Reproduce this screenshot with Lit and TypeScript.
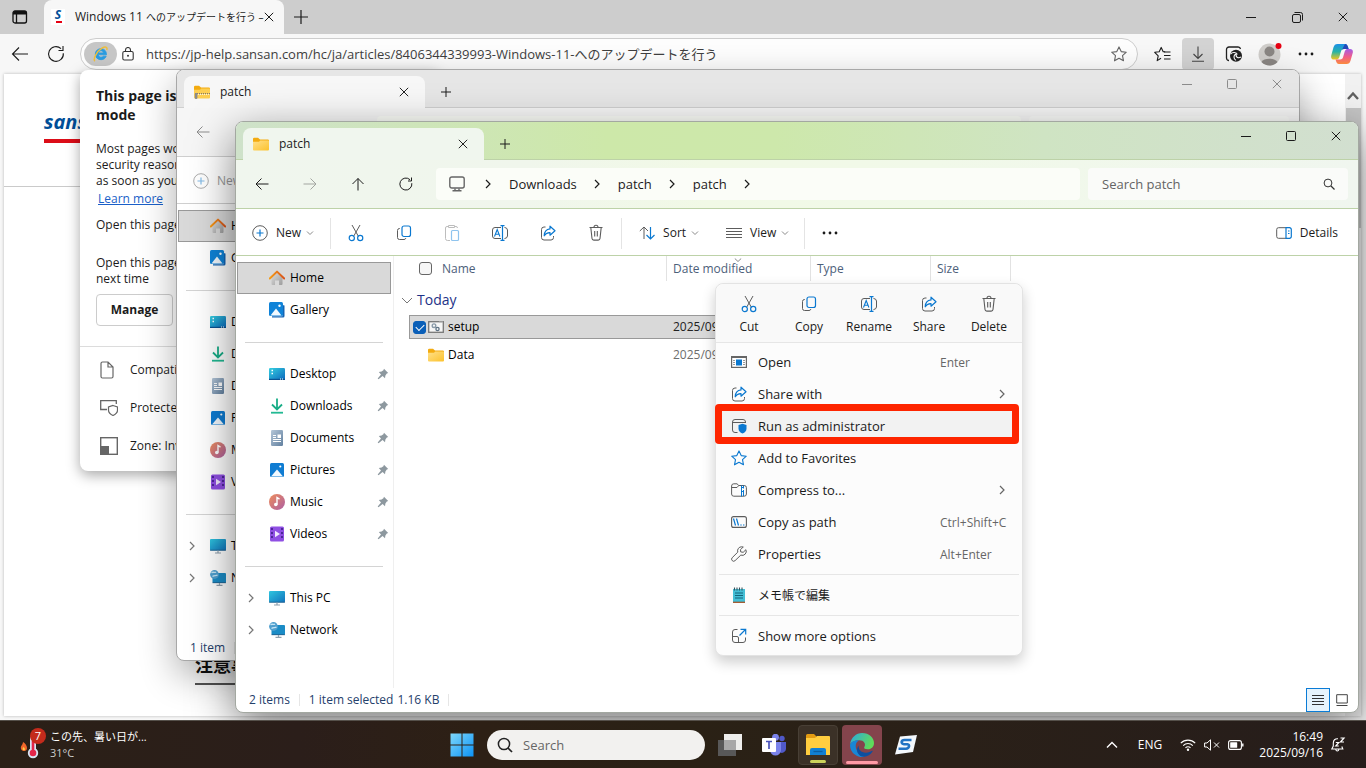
import { LitElement, html, svg, css, nothing, TemplateResult } from "lit";
import { customElement, property } from "lit/decorators.js";
import { classMap } from "lit/directives/class-map.js";

const box = (w: number, h: number, inner: unknown, vb = `0 0 ${w} ${h}`) =>
  html`<svg class="ic" width=${w} height=${h} viewBox=${vb} fill="none" aria-hidden="true">${inner}</svg>`;

const G = "#5c5c5c";
const B = "#0a78d0";

const icons: Record<string, () => TemplateResult> = {
  back: () => box(16, 16, svg`<path d="M14.500 8H2M7.500 2.500L2 8l5.500 5.500" stroke="currentColor"/>`),
  forward: () => box(16, 16, svg`<path d="M1.500 8H14M8.500 2.500L14 8l-5.500 5.500" stroke="currentColor"/>`),
  up: () => box(16, 16, svg`<path d="M8 14.500V2.500M2.500 8L8 2.500 13.500 8" stroke="currentColor"/>`),
  refresh: () => box(16, 16, svg`<path d="M13.800 7.200A6 6 0 1 1 12 3.700M13.500 1.500v3.500H10" stroke="currentColor"/>`),
  refreshBig: () => box(18, 18, svg`<path d="M16.300 8.200A7.400 7.400 0 1 1 14 3.600M16 1v4.500h-4.500" stroke="currentColor" stroke-width="1.100"/>`),
  backBig: () => box(18, 18, svg`<path d="M17 9H1.500M8 2.500L1.500 9l6.500 6.500" stroke="currentColor" stroke-width="1.100"/>`),
  close: () => box(10, 10, svg`<path d="M.8.8l8.400 8.400M9.200.8L.8 9.200" stroke="currentColor"/>`),
  plus: () => box(12, 12, svg`<path d="M6 1v10M1 6h10" stroke="currentColor"/>`),
  plusBig: () => box(16, 16, svg`<path d="M8 1v14M1 8h14" stroke="currentColor" stroke-width="1.200"/>`),
  min: () => box(10, 10, svg`<path d="M0 5.500h10" stroke="currentColor"/>`),
  max: () => box(10, 10, svg`<rect x=".5" y=".5" width="9" height="9" rx="1" stroke="currentColor"/>`),
  restore: () => box(11, 11, svg`<rect x=".5" y="2.500" width="8" height="8" rx="1.500" stroke="currentColor"/><path d="M2.500.5H8.500a2 2 0 0 1 2 2V8.500" stroke="currentColor"/>`),
  right: () => box(8, 10, svg`<path d="M2 1l4 4-4 4" stroke="currentColor" stroke-width="1.200"/>`),
  down: () => box(8, 6, svg`<path d="M1 1.500l3 3 3-3" stroke="#8a8a8a"/>`),
  search: () => box(12, 12, svg`<circle cx="5" cy="5" r="3.900" stroke="currentColor"/><path d="M8 8l3.500 3.500" stroke="currentColor" stroke-width="1.200"/>`),
  searchBig: () => box(16, 16, svg`<circle cx="7" cy="7" r="5.600" stroke="#222" stroke-width="1.500"/><path d="M11 11l4 4" stroke="#222" stroke-width="1.700"/>`),
  monitor: () => box(16, 16, svg`<rect x=".8" y="1" width="14.400" height="11" rx="2" stroke="#666" stroke-width="1.400"/><path d="M6 12.500v2M10 12.500v2M3.500 14.800h9" stroke="#666" stroke-width="1.400"/>`),
  newItem: () => box(16, 16, svg`<circle cx="8" cy="8" r="7.300" stroke="${G}"/><path d="M8 4.500v7M4.500 8h7" stroke="${B}" stroke-width="1.200"/>`),
  cut: () => box(16, 18, svg`<path d="M4 1l6.500 11.500M12 1L5.500 12.500" stroke="${G}"/><circle cx="3.800" cy="14" r="2.600" stroke="${B}" stroke-width="1.200"/><circle cx="12.200" cy="14" r="2.600" stroke="${B}" stroke-width="1.200"/>`),
  copy: () => box(16, 16, svg`<rect x="6" y="1" width="8.500" height="10.500" rx="2" stroke="${B}" stroke-width="1.200"/><path d="M4 3.500H3.500a2 2 0 0 0-2 2V12.500a2 2 0 0 0 2 2H8a2 2 0 0 0 1.900-1.400" stroke="${G}"/>`),
  paste: () => box(16, 18, svg`<path d="M6 16.500H3.500a2 2 0 0 1-2-2V4a1.500 1.500 0 0 1 1.500-1.500h1.500M10.500 2.500H12A1.500 1.500 0 0 1 13.500 4M4.500 1.500h6v2h-6z" stroke="#bdbdbd"/><rect x="7.500" y="6.500" width="7" height="10" rx="1" stroke="#8fc4ee" stroke-width="1.200"/>`),
  rename: () => box(18, 16, svg`<path d="M10 2.500H4a2.500 2.500 0 0 0-2.500 2.500v6A2.500 2.500 0 0 0 4 13.500h6M13.500 2.500a3 3 0 0 1 3 2.500v6a3 3 0 0 1-3 2.500" stroke="${G}"/><path d="M11.500.5v15M9.500.6h4M9.500 15.400h4" stroke="${B}" stroke-width="1.200"/><path d="M3.500 11.500l2.700-7 2.700 7M4.500 9.200h3.500" stroke="${B}" stroke-width="1.100"/>`),
  share: () => box(16, 16, svg`<path d="M5.500 2H4a2.500 2.500 0 0 0-2.500 2.500v8A2.500 2.500 0 0 0 4 15h7a2.500 2.500 0 0 0 2.500-2.500v-1.500" stroke="${G}"/><path d="M10 1.200l5 4.600-5 4.400V7.600C7.200 7.500 5.500 8.600 4.200 10.800 4.400 6.800 6.500 4.200 10 3.900z" stroke="${B}" stroke-width="1.200" stroke-linejoin="round"/>`),
  trash: () => box(16, 18, svg`<path d="M1.500 3.500h13M6 3.200a2 2 0 0 1 4 0M2.800 3.500l1.200 11a1.800 1.800 0 0 0 1.800 1.600h4.400a1.800 1.800 0 0 0 1.800-1.600l1.200-11M6.700 7v5.500M9.300 7v5.500" stroke="${G}" stroke-width="1.100"/>`),
  sort: () => box(16, 14, svg`<path d="M5 13V1M.8 5L5 1l4 4" stroke="${G}"/><path d="M11.500 1v12M7.500 9l4 4 4-4" stroke="${B}" stroke-width="1.200"/>`),
  lines: () => box(16, 12, svg`<path d="M0 1.500h16M0 4.500h16M0 7.500h16M0 10.500h16" stroke="${G}"/>`),
  dots: () => box(16, 4, svg`<circle cx="2" cy="2" r="1.400" fill="currentColor"/><circle cx="8" cy="2" r="1.400" fill="currentColor"/><circle cx="14" cy="2" r="1.400" fill="currentColor"/>`),
  details: () => box(16, 12, svg`<path d="M10 .7H2.500A1.800 1.800 0 0 0 .7 2.500v7a1.800 1.800 0 0 0 1.800 1.800H10" stroke="${G}"/><path d="M10 .7h3.500a1.800 1.800 0 0 1 1.800 1.800v7a1.800 1.800 0 0 1-1.800 1.800H10zM12 4h1.500M12 6.500h1.500" stroke="${B}" stroke-width="1.200"/>`),
  pin: () => box(12, 12, svg`<path d="M7 .8L11.200 5 9.800 5.600 8.400 7.400 8 10.300 5.600 8 1.500 11.300.7 10.500 4 6.400 1.800 4.100 4.600 3.600 6.400 2.200z" fill="#8d989f"/>`),
  folder: () => box(16, 16, svg`<defs><linearGradient id="fo" x2="1" y2="1"><stop stop-color="#ffe08a"/><stop offset="1" stop-color="#fcc22c"/></linearGradient></defs><path d="M0 3a1.200 1.200 0 0 1 1.200-1.200H5L7 3.500h7.800A1.200 1.200 0 0 1 16 4.700V8H0z" fill="#f3ab10"/><path d="M0 5.700h6l1.200-1.200H15a1 1 0 0 1 1 1v8a1 1 0 0 1-1 1H1a1 1 0 0 1-1-1z" fill="url(#fo)"/>`),
  zip: () => box(16, 16, svg`<path d="M0 3a1.200 1.200 0 0 1 1.200-1.200H5L7 3.500h7.800A1.200 1.200 0 0 1 16 4.700V8H0z" fill="#f3ab10"/><path d="M0 5.700h6l1.200-1.200H15a1 1 0 0 1 1 1v8a1 1 0 0 1-1 1H1a1 1 0 0 1-1-1z" fill="#fdcf52"/><path d="M1 9.500h15" stroke="#777" stroke-dasharray="1 1"/><path d="M2 10.500h14" stroke="#eee" stroke-dasharray="1 1"/><rect x=".8" y="9" width="2.600" height="6" rx="1" fill="#8b8b8b"/>`),
  home: () => box(16, 16, svg`<defs><linearGradient id="hg" x2="1" y2="1"><stop stop-color="#dedede"/><stop offset="1" stop-color="#9c9c9c"/></linearGradient><linearGradient id="hr" x2="1" y2="0"><stop stop-color="#f59b16"/><stop offset="1" stop-color="#d9541b"/></linearGradient></defs><path d="M2.500 7L8 2l5.500 5v7a1 1 0 0 1-1 1H10v-4.500H6V15H3.500a1 1 0 0 1-1-1z" fill="url(#hg)"/><path d="M.8 8.500L8 1.600l7.200 6.900" stroke="url(#hr)" stroke-width="2" stroke-linecap="round" stroke-linejoin="round"/>`),
  gallery: () => box(16, 16, svg`<path d="M3 14.200h10.500V3l2 .5V14a1.500 1.500 0 0 1-1.500 1.500H3z" fill="#1464b4"/><rect width="14" height="14" rx="1.500" fill="#0f83d8"/><path d="M1.500 13.500l5.500-7 5.500 7z" fill="#f2f9ff"/><circle cx="10.500" cy="3.800" r="1.200" fill="#fff"/>`),
  desktop: () => box(16, 16, svg`<defs><linearGradient id="dg" x2="1" y2="1"><stop stop-color="#34cfe0"/><stop offset="1" stop-color="#0c68bd"/></linearGradient></defs><rect y="2" width="16" height="12" rx="1.200" fill="url(#dg)"/><path d="M2.500 4.500h1.500M2.500 7.500h1.500" stroke="#fff" stroke-width="1.500"/><path d="M0 13.400h16" stroke="#0a5291" stroke-width="1.200"/><path d="M11 13h1M13 13h1" stroke="#fff"/>`),
  downloads: () => box(16, 16, svg`<path d="M8 .5v10.500M3 6.500l5 5 5-5" stroke="#19ad87" stroke-width="1.800"/><path d="M2 14.700h12" stroke="#22b993" stroke-width="1.800"/>`),
  documents: () => box(16, 16, svg`<defs><linearGradient id="dc" x2="1" y2="1"><stop stop-color="#b4c6d8"/><stop offset="1" stop-color="#62809f"/></linearGradient></defs><rect x="2" width="12" height="16" rx="1.200" fill="url(#dc)"/><path d="M4 5.500h3M4 7.500h3M4 9.500h8M4 11.500h8" stroke="#fff"/><rect x="8.500" y="4.500" width="3.500" height="3.500" fill="#fff"/>`),
  pictures: () => box(16, 16, svg`<rect x="1" y="1" width="14" height="14" rx="1.500" fill="#0f7cd2"/><path d="M2 14.500l6-7 6 7z" fill="#f2f9ff"/><circle cx="11.300" cy="4.500" r="1.100" fill="#fff"/>`),
  music: () => box(16, 16, svg`<defs><linearGradient id="mg" x2="1" y2="1"><stop stop-color="#ee8d5b"/><stop offset="1" stop-color="#ad5fa3"/></linearGradient></defs><circle cx="8" cy="8" r="8" fill="url(#mg)"/><circle cx="6.800" cy="10.500" r="1.800" fill="#fff"/><path d="M8 10.500V3.500l2.500 1.600" stroke="#fff" stroke-width="1.400"/>`),
  videos: () => box(16, 16, svg`<rect x="1" y=".5" width="14" height="15" rx="1.500" fill="#8f4fe3"/><path d="M3 2v12M13 2v12" stroke="#3e1f86" stroke-width="1.600" stroke-dasharray="2 2"/><path d="M6 4.800l5 3.200-5 3.200z" fill="#f1e8fd"/>`),
  pc: () => box(16, 16, svg`<defs><linearGradient id="pg" x2="1" y2="1"><stop stop-color="#2fc6df"/><stop offset="1" stop-color="#1173bd"/></linearGradient></defs><rect y="1" width="16" height="11.500" rx="1" fill="url(#pg)"/><path d="M0 12.200h16" stroke="#235b85" stroke-width=".8"/><path d="M8 12.500v2.500M5 15h6" stroke="#8fa0ad" stroke-width="1.200"/>`),
  network: () => box(16, 16, svg`<rect x="2.500" y="3" width="13.500" height="10" rx="1" fill="#1b8cc6"/><path d="M2.500 12.700H16" stroke="#235b85" stroke-width=".8"/><path d="M9.500 13v2M6.500 15.300h6" stroke="#8fa0ad" stroke-width="1.200"/><circle cx="4.500" cy="4.500" r="4.400" fill="#4f9fce"/><path d="M1.500 2.800c2-1.500 3 .5 4.500-.8M2.500 6.500c1.500-1.500 3.500-.5 5-1.500" stroke="#c6e5f5" stroke-width="1.300"/>`),
  script: () => box(16, 12, svg`<rect x=".7" y=".7" width="14.600" height="10.600" fill="#f6f6f6" stroke="#777" stroke-width="1.300"/><path d="M11 1h4" stroke="#bbb"/><circle cx="6" cy="4.700" r="1.800" stroke="#8a9aa8" stroke-width="1.400"/><circle cx="9.500" cy="8" r="1.600" stroke="#5d7183" stroke-width="1.300"/>`),
  expand: () => box(12, 7, svg`<path d="M1 1l5 5 5-5" stroke="#777"/>`),
  sortMark: () => box(8, 4, svg`<path d="M.8.5L4 3.500 7.200.5" stroke="#8a8a8a"/>`),
  thumb: () => box(12, 12, svg`<path d="M.7.7h10.600v8.300H.7zM.5 11.500h11" stroke="#444"/>`),
  rows: () => box(12, 12, svg`<path d="M0 1.500h12M0 4.500h12M0 7.500h12M0 10.500h12" stroke="#333"/>`),
  open: () => box(16, 12, svg`<rect x=".6" y=".6" width="14.800" height="10.800" fill="#fff" stroke="#666" stroke-width="1.200"/><path d="M1 1.500h14" stroke="#666"/><rect x="5" y="3.500" width="6" height="6" fill="#0a78d0"/><path d="M2 4.500h2M2 6.500h2M2 8.500h2M12 4.500h2M12 6.500h2M12 8.500h2" stroke="#999"/>`),
  admin: () => box(16, 16, svg`<path d="M6.500 14.500H4A2.500 2.500 0 0 1 1.500 12V4A2.500 2.500 0 0 1 4 1.500h8A2.500 2.500 0 0 1 14.500 4v1M1.500 4.500h13" stroke="${G}"/><path d="M11.500 5.800l4 1.300v3.600c0 2.200-1.500 3.800-4 4.800-2.500-1-4-2.600-4-4.800V7.100z" fill="#0a78d0"/>`),
  star: () => box(16, 16, svg`<path d="M8 .9l2.200 4.700 5.100.6-3.800 3.500 1 5.100L8 12.300l-4.500 2.500 1-5.100L.7 6.200l5.100-.6z" stroke="currentColor" stroke-linejoin="round" stroke-width="1.100"/>`),
  starList: () => box(17, 16, svg`<path d="M7 12.200L3.200 14.600l1-4.800L.7 6.300l4.500-.6L7.200 1.400l2 4.300h2" stroke="currentColor" stroke-linejoin="round" stroke-width="1.100"/><path d="M10 6h6.500M10 9.500h6.500M10 13h6.500" stroke="currentColor" stroke-width="1.100"/>`),
  compress: () => box(16, 14, svg`<path d="M.6 3A2.200 2.200 0 0 1 2.800.8H6l1.800 1.700h5.400a2.200 2.200 0 0 1 2.200 2.200v6.300a2.200 2.200 0 0 1-2.200 2.200H2.800A2.200 2.200 0 0 1 .6 11zM.6 4.500H6l1.800-2" stroke="${G}"/><path d="M10.500 2.500v11M12.500 2.500v3M12.500 7v6M10.500 4.500h2M10.500 8.500h2" stroke="${B}"/>`),
  path: () => box(16, 12, svg`<rect x=".6" y=".6" width="14.800" height="10.800" rx="2" stroke="${G}" stroke-width="1.100"/><path d="M2.500 2.500l2 7M5.500 2.500l2 7M9.300 9h1.400M12 9h1.400" stroke="${B}" stroke-width="1.200"/>`),
  wrench: () => box(16, 16, svg`<path d="M10.800.8a4 4 0 0 0-4 5.300L1.200 11.700a1.900 1.900 0 0 0 2.900 2.900l5.700-5.500a4 4 0 0 0 5.100-5.400L12.200 6.300 9.700 5.900 9.500 3.700 12.300.9a4 4 0 0 0-1.500-.1z" stroke="${G}" stroke-linejoin="round"/>`),
  notepad: () => box(14, 16, svg`<rect x="1" y="2" width="12" height="13" fill="#44bfd6"/><path d="M1 15.300h12" stroke="#9a4b1e" stroke-width="1.200"/><path d="M3 6h8M3 8.500h8M3 11h8" stroke="#12657c" stroke-width="1.100"/><path d="M2.500 .5v3M5 .5v3M7.500 .5v3M10 .5v3" stroke="#35525c" stroke-width="1.100"/>`),
  more: () => box(16, 16, svg`<path d="M6.500 1.500H4A2.500 2.500 0 0 0 1.500 4v8A2.500 2.500 0 0 0 4 14.500h8a2.500 2.500 0 0 0 2.500-2.500V9.500M1.500 8.500H6a1.500 1.500 0 0 1 1.500 1.500v4.500" stroke="${G}"/><path d="M9.500 1.300h5.200v5.200M14.500 1.500L8.500 7.500" stroke="${B}" stroke-width="1.200"/>`),
  tabs: () => box(16, 14, svg`<rect x="1" y="1" width="13.500" height="12" rx="2" stroke="#111" stroke-width="1.300"/><path d="M1 4.500V3a2 2 0 0 1 2-2h9.500a2 2 0 0 1 2 2v1.500z" fill="#111"/><path d="M4.500 4v9" stroke="#111" stroke-width="1.300"/>`),
  ie: () => box(18, 16, svg`<path d="M14.500 8.800H6.300c.2 1.600 1.200 2.400 2.700 2.400 1 0 1.700-.3 2.200-1h3c-.8 2.300-2.700 3.500-5.200 3.500-3.300 0-5.700-2.300-5.700-5.500S5.700 2.700 9 2.700s5.500 2.300 5.500 6.100zM6.400 6.900h5c-.2-1.300-1.100-2.100-2.400-2.100s-2.300.8-2.600 2.100z" fill="#2a9be0" stroke="#2a9be0" stroke-width=".8"/><path d="M3 15.200C.6 13.500 4.500 5.500 10 2.200c3-1.800 6-1.400 4.700 1.800" stroke="#edbe3c" stroke-width="1.500"/>`),
  lock: () => box(12, 14, svg`<rect x=".8" y="4.500" width="10.400" height="8.500" rx="1.500" stroke="#333" stroke-width="1.100"/><path d="M3.500 4.500V3a2.500 2.500 0 0 1 5 0v1.500" stroke="#333" stroke-width="1.100"/><circle cx="6" cy="8.700" r="1" fill="#333"/>`),
  download: () => box(14, 16, svg`<path d="M7 .5v12M2.500 8L7 12.500 11.500 8M1 15.300h12" stroke="#444" stroke-width="1.100"/>`),
  edgeTool: () => box(18, 17, svg`<path d="M4 14.500a2.500 2.500 0 0 1-2.500-2.500V3.500a2.500 2.500 0 0 1 2.500-2.500h9a2.500 2.500 0 0 1 2.500 2" stroke="#222" stroke-width="1.300"/><circle cx="11" cy="9.700" r="6" fill="#222"/><path d="M5.500 8.200c2-2.600 6-2 6.800.3M11 8c-2.800 1-2.600 4.600 0 6.400M11.500 8.500c-1.300 2.200 1.500 4.200 4.500 2.600" stroke="#fff" stroke-width="1.100"/>`),
  avatar: () => box(24, 24, svg`<circle cx="11.500" cy="12.500" r="11" fill="#cfcdca"/><circle cx="11.500" cy="9.500" r="5" fill="#8a8683"/><path d="M3.500 20a8.500 5 0 0 1 16 0 11 11 0 0 1-16 0z" fill="#8a8683"/><circle cx="20.500" cy="4" r="3" fill="#e60012"/>`),
  copilot: () => box(22, 20, svg`<defs><linearGradient id="c1" x2="0" y2="1"><stop stop-color="#1b8fe8"/><stop offset=".5" stop-color="#27b3a6"/><stop offset="1" stop-color="#f3c51c"/></linearGradient><linearGradient id="c2" x2="0" y2="1"><stop stop-color="#a35be8"/><stop offset=".5" stop-color="#ef5c8c"/><stop offset="1" stop-color="#fb8b3c"/></linearGradient></defs><path d="M6.500 0h7.500c2 0 2.500 1.500 3 3l.6 2H13c-2 0-2.700 1.200-3.200 3l-1.600 5.500C7.500 15 6.500 15.500 5 15.500H3C.5 15.500-.3 13.500.3 11.300l2.200-8C3.200 1.200 4.300 0 6.500 0z" fill="url(#c1)"/><path d="M14 0c2 0 2.500 1.500 3 3l.6 2H13c-1 0-1.700.3-2.200 1z" fill="#2348b8"/><path d="M15.500 20H8c-2 0-2.500-1.500-3-3l-.4-1.500H9c2 0 2.700-1 3.200-2.800l1.600-5.500C14.500 5.500 15.500 5 17 5h2c2.500 0 3.300 1.700 2.700 4l-2.200 7.700C18.800 19 17.700 20 15.500 20z" fill="url(#c2)"/>`),
  page: () => box(14, 18, svg`<path d="M1 2.500A1.500 1.500 0 0 1 2.500 1H8l5 5v9.500a1.500 1.500 0 0 1-1.500 1.500h-9A1.500 1.500 0 0 1 1 15.500zM8 1v5h5" stroke="#666" stroke-width="1.200"/>`),
  shield: () => box(18, 16, svg`<path d="M7 9.500H.7V.7h15.600V4" stroke="#666" stroke-width="1.300"/><path d="M13 5.500l4.500 1.500v3.300c0 2.300-1.700 4-4.500 5.200-2.800-1.200-4.500-2.900-4.500-5.200V7z" stroke="#666" stroke-width="1.200"/>`),
  zone: () => box(18, 18, svg`<rect x=".7" y=".7" width="16.600" height="16.600" stroke="#666" stroke-width="1.400"/><rect x="1" y="9" width="8" height="8" fill="#666"/>`),
  scrollUp: () => box(12, 10, svg`<path d="M1 8l5-5.500L11 8" stroke="#606060" stroke-width="2.400"/>`),
  start: () => box(24, 24, svg`<defs><linearGradient id="wn" x2="1" y2="1"><stop stop-color="#7fd8fb"/><stop offset="1" stop-color="#0c93f5"/></linearGradient></defs><path d="M.5.500h11v11h-11zM12.500.500h11v11h-11zM.5 12.500h11v11h-11zM12.500 12.500h11v11h-11z" fill="url(#wn)"/>`),
  taskView: () => box(24, 22, svg`<rect x="6" width="18" height="16" fill="#eeeeec"/><rect y="6" width="18" height="16" fill="#585858"/><rect x="6" y="6" width="12" height="10" fill="#a8a8a8"/>`),
  teams: () => box(24, 22, svg`<circle cx="20" cy="4.500" r="2.700" fill="#5059c9"/><circle cx="13.500" cy="3.300" r="3.500" fill="#7b83eb"/><path d="M17 8h7v7a4 4 0 0 1-7 2.500z" fill="#5059c9"/><path d="M8 8h11v8a5.500 5.500 0 0 1-11 0z" fill="#7b83eb"/><rect y="4" width="14" height="14" rx="1" fill="#fff"/><path d="M4 7.500h6M7 7.500v7.500" stroke="#4b53bc" stroke-width="1.700"/>`),
  explorer: () => box(24, 22, svg`<path d="M0 1.500A1.500 1.500 0 0 1 1.500 0H8l2.500 2.500V6H0z" fill="#e39b12"/><path d="M0 4h9l2-2h12a1 1 0 0 1 1 1v18H0z" fill="#ffcd3f"/><path d="M4 21v-5a2 2 0 0 1 2-2h12a2 2 0 0 1 2 2v5z" fill="#1180d4"/><path d="M7.500 17.500h9" stroke="#0b5ea3" stroke-width="1.300"/>`),
  edge: () => box(24, 24, svg`<defs><linearGradient id="e1" x2="1" y2=".4"><stop stop-color="#2aa7e4"/><stop offset="1" stop-color="#5fdc5a"/></linearGradient></defs><path d="M0 11.500C1 4.500 6 0 12.200 0 19 0 24 4.600 24 10c0 4-3 6.300-6.300 6.300-2.700 0-4-1-3.500-2 2.300-3.500-.6-7-4.700-7C5 7.300 1.300 9 0 11.500z" fill="url(#e1)"/><path d="M0 12c1-3.500 5-5 9-4.700-3 2-3.800 4.800-3 8 .9 3.500 4 7 8.500 8.400A12 12 0 0 1 0 12z" fill="#1887d6"/><path d="M8.800 12.500C8 17 12 20.500 17.500 19.500c1.800-.3 3.300-1.200 4.700-1.700.5-.1.600.3.300.8-2 3.500-5 5-8.500 5.200-6 0-9.200-7-5.200-11.300z" fill="#0d4fa0"/>`),
  snap: () => box(22, 20, svg`<path d="M5 1.500L22 0l-4 17L0 19.500z" fill="#f4f8fc"/><path d="M16.500 5H9.500C6 5 5.500 9 9 9.200h3.500c2.500.3 2 4.300-1.500 4.500H3.500" stroke="#2273c4" stroke-width="2.600"/>`),
  caret: () => box(12, 8, svg`<path d="M1 6.500l5-5 5 5" stroke="#fff" stroke-width="1.400"/>`),
  wifi: () => box(16, 12, svg`<path d="M.8 4.200a10 10 0 0 1 14.400 0M3.200 6.600a6.700 6.700 0 0 1 9.600 0M5.500 8.800a3.500 3.500 0 0 1 5 0" stroke="#fff" stroke-width="1.100"/><circle cx="8" cy="10.700" r="1.200" fill="#fff"/>`),
  mute: () => box(16, 12, svg`<path d="M.6 4h2.400L6.500.8v10.400L3 8H.6zM10 3.500l5 5M15 3.500l-5 5" stroke="#fff"/>`),
  battery: () => box(16, 10, svg`<rect x=".6" y=".6" width="12.800" height="8.800" rx="2" stroke="#fff" stroke-width="1.100"/><rect x="2.200" y="2.200" width="7" height="5.600" rx=".5" fill="#fff"/><path d="M14.800 3.500v3" stroke="#fff" stroke-width="1.400"/>`),
  bell: () => box(16, 16, svg`<path d="M8 1.800C5 1.500 3.300 3.300 3.300 6v3L1.800 12h11l-1-2.500M5.800 12.500c.3 2 2.700 2 3 0" stroke="#fff" stroke-width="1.100"/><path d="M5.800 5.500h3L5.800 9h3M10.500 1h3.500l-3.500 4H14" stroke="#fff" stroke-width="1.200"/>`),
  weather: () => box(26, 28, svg`<path d="M4 20c-3.500-.5-4-4-2-6 .5-1 1-2 1-3 2 1 4 3.500 4 6 0 2-1 3-3 3z" fill="#f2672a"/><path d="M4 19.500c-1.500-.3-2-2-.5-3.500 1.500 1 2 3 .5 3.500z" fill="#ffd04a"/><rect x="10" y="5" width="6" height="18" rx="3" fill="#d8e6f5"/><circle cx="13" cy="22" r="5.200" fill="#d8e6f5"/><circle cx="13" cy="22" r="3.300" fill="#e3264a"/><rect x="11.700" y="10" width="2.600" height="11" fill="#e3264a"/>`),
};

const ic = (n: string) => icons[n]();

const base = css`
  * { box-sizing: border-box; }
  :host { box-sizing: border-box; font-family: "Open Sans", "Noto Sans CJK JP", sans-serif; font-size: 12px; line-height: 16px; color: #1b1b1b; }
  button, input { font: inherit; color: inherit; background: none; border: 0; padding: 0; margin: 0; outline: 0; }
  button { display: flex; align-items: center; justify-content: center; white-space: nowrap; }
  .ic { display: block; flex: none; }
`;

@customElement("explorer-window")
class ExplorerWindow extends LitElement {
  @property({ type: Boolean, reflect: true }) inactive = false;
  @property() tabIcon = "folder";

  static styles = [base, css`
    :host { display: flex; flex-direction: column; border: 1px solid #a3a8a1; border-radius: 8px; overflow: hidden; background: #fff;
      --line: #bdd2a8; --tab: #f0f6ee; --fg: #1b1b1b; }
    :host([inactive]) { --line: #cfcfcf; --tab: #f7f7f7; --fg: #8c8c8c; border-color: #a8a8a8; }
    .title { display: flex; height: 38px; padding: 6px 0 0 7px; border-bottom: 1px solid var(--line); flex: none;
      background: linear-gradient(90deg, #cfe2ca, #cde8a9 33%, #cde8ab 48%, #cfe4c3 72%, #d2dfd0); }
    :host([inactive]) .title { background: #e6e6e6; }
    .tab { display: flex; align-items: center; width: 241px; height: 32px; margin-bottom: -1px; padding: 0 9px 0 10px; gap: 10px;
      border-radius: 8px 8px 0 0; background: var(--tab); font-size: 12px; }
    .tab button { margin-left: auto; width: 24px; height: 24px; color: #222; }
    .plus { width: 32px; height: 32px; margin-left: 5px; }
    .wc { display: flex; margin: -6px 0 0 auto; color: var(--fg); }
    .wc button { width: 45px; height: 28px; }
    .nav { display: flex; align-items: center; height: 49px; padding-right: 10px; flex: none; border-bottom: 1px solid var(--line);
      background: linear-gradient(90deg, #f0f6ee, #f0f6ec 26%, #f1f9e6 42%, #f1f9e9 62%, #f0f6ef); color: var(--fg); }
    :host([inactive]) .nav { background: #f6f6f6; }
    .nav .ar { width: 48px; height: 32px; }
    .nav .dim { color: #a2a5a0; }
    .nav .ar:first-child { margin-left: 2px; }
    .addr { flex: 1; display: flex; align-items: center; height: 32px; margin: 0 8px 0 6px; border-radius: 4px; background: #fbfdf8; font-size: 13px; }
    .addr .mon { width: 42px; }
    .addr .sep { width: 20px; display: flex; justify-content: center; }
    .addr .crumb { padding: 0 10px 0 11px; }
    .find { display: flex; align-items: center; width: 260px; height: 32px; border-radius: 4px; background: #fafbf9; padding: 0 13px 0 14px; color: #333; }
    .find input { flex: 1; min-width: 0; font-size: 13px; }
    .find input::placeholder { color: #646464; opacity: 1; }
    .tools { display: flex; align-items: center; height: 47px; flex: none; border-bottom: 1px solid var(--line); padding: 2px 12px 0 8px; font-size: 12px; }
    .tools button { height: 32px; width: 48px; }
    .tools .txt { gap: 8px; width: auto; padding: 0 8px; }
    .tools .txt span + .ic { margin-left: -3px; }
    .tools .first { padding: 0 15px 0 8px; }
    .tools .sort { padding: 0 11px 0 16px; }
    .tools .view { padding: 0 14px 0 16px; }
    .tools .end { margin-left: auto; }
    .bar { width: 1px; height: 31px; margin: 0 1px; background: #e4e4e4; }
    :host([inactive]) .tools { color: #999; }
    :host([inactive]) .tools .ic { opacity: .5; }
    .body { flex: 1; display: flex; min-height: 0; }
    nav { width: 158px; padding: 6px 2px 0 1px; border-right: 1px solid #efefef; color: #000; flex: none; }
    nav a { display: flex; align-items: center; height: 32px; padding-right: 1px; color: inherit; text-decoration: none; border: 1px solid transparent; }
    nav a .tw { width: 31px; padding-left: 9px; color: #777; }
    nav a .name { flex: 1; margin-left: 5px; }
    nav a.on { background: #d9d9d9; border-color: #999; }
    nav hr { border: 0; height: 32px; margin: 0 8px; background: linear-gradient(#d4d4d4, #d4d4d4) center / 100% 1px no-repeat; }
    table { border-collapse: collapse; table-layout: fixed; width: 617px; height: max-content; color: #4c607a; }
    th, td { padding: 0; text-align: left; font-weight: 400; vertical-align: top; }
    .hd { display: flex; align-items: center; height: 25px; padding-left: 6px; border-right: 1px solid #e2e2e2; position: relative; }
    .hd.nm { padding-left: 10px; gap: 10px; }
    .hd .ic { position: absolute; top: 2px; left: 67px; }
    .grp { display: flex; align-items: center; gap: 4px; height: 34px; padding: 4px 0 0 7px; font-size: 14px; line-height: 20px; color: #1e3287; }
    .c { display: flex; align-items: center; height: 24px; margin-bottom: 4px; padding-left: 6px; white-space: nowrap; color: #6d6d6d; border: solid transparent; border-width: 1px 0; }
    .c.nm { padding-left: 3px; border-left-width: 1px; color: #000; gap: 4px; }
    .c.un { padding-left: 18px; }
    .sel .c { background: #d9d9d9; border-color: #999; color: #222; }
    .sel .c.nm { color: #000; gap: 2px; }
    .sel .c.nm .ic { margin-right: 2px; }
    input[type=checkbox] { appearance: none; width: 13px; height: 13px; border: 1px solid #666; border-radius: 3px; background: #f6f6f6; flex: none; display: grid; place-items: center; }
    input[type=checkbox]:checked { background: #0a5fb8; border-color: #0a5fb8; }
    input[type=checkbox]:checked::before { content: ""; width: 7px; height: 4px; border: solid #fff; border-width: 0 0 1px 1px; transform: rotate(-45deg); margin-top: -2px; }
    .status { display: flex; align-items: center; height: 24px; flex: none; padding-left: 13px; color: #24406b; white-space: nowrap; }
    .status i { width: 1px; height: 12px; background: #e6e6e6; margin: 0 9px; }
    .status .sz { margin-left: 4px; }
    .modes { margin-left: auto; display: flex; padding-right: 4px; }
    .modes button { width: 24px; height: 24px; border: 1px solid transparent; }
    .modes .on { border-color: #0a7bd6; background: #e6f3fc; }
  `];

  private link(name: string, icon: string, pin = false, tw = false, on = false) {
    return html`<a href="#" class=${classMap({ on })}><span class="tw">${tw ? ic("right") : nothing}</span>${ic(icon)}<span class="name">${name}</span>${pin ? ic("pin") : nothing}</a>`;
  }

  render() {
    const sep = html`<span class="sep">${ic("right")}</span>`;
    return html`
      <header class="title">
        <div class="tab">${ic(this.tabIcon)}<span>patch</span><button aria-label="Close tab">${ic("close")}</button></div>
        <button class="plus" aria-label="New tab">${ic("plus")}</button>
        <div class="wc"><button aria-label="Minimize">${ic("min")}</button><button aria-label="Maximize">${ic("max")}</button><button aria-label="Close">${ic("close")}</button></div>
      </header>
      <div class="nav">
        <button class="ar" aria-label="Back">${ic("back")}</button>
        <button class="ar dim" aria-label="Forward">${ic("forward")}</button>
        <button class="ar" aria-label="Up">${ic("up")}</button>
        <button class="ar" aria-label="Refresh">${ic("refresh")}</button>
        <div class="addr"><button class="mon" aria-label="This PC">${ic("monitor")}</button>${sep}
          <button class="crumb">Downloads</button>${sep}<button class="crumb">patch</button>${sep}<button class="crumb">patch</button>${sep}</div>
        <div class="find"><input aria-label="Search patch" placeholder="Search patch">${ic("search")}</div>
      </div>
      <div class="tools">
        <button class="txt first">${ic("newItem")}<span>New</span>${ic("down")}</button><span class="bar"></span>
        ${["cut", "copy", "paste", "rename", "share", "trash"].map(n => html`<button aria-label=${n}>${ic(n)}</button>`)}
        <span class="bar"></span>
        <button class="txt sort">${ic("sort")}<span>Sort</span>${ic("down")}</button>
        <button class="txt view">${ic("lines")}<span>View</span>${ic("down")}</button><span class="bar"></span>
        <button aria-label="More">${ic("dots")}</button>
        <button class="txt end">${ic("details")}<span>Details</span></button>
      </div>
      <div class="body">
        <nav>
          ${this.link("Home", "home", false, false, true)}${this.link("Gallery", "gallery")}<hr>
          ${["Desktop", "Downloads", "Documents", "Pictures", "Music", "Videos"].map(n => this.link(n, n.toLowerCase(), true))}<hr>
          ${this.link("This PC", "pc", false, true)}${this.link("Network", "network", false, true)}
        </nav>
        ${this.inactive ? nothing : html`<table>
          <colgroup><col style="width:15px"><col style="width:258px"><col style="width:144px"><col style="width:120px"><col style="width:80px"></colgroup>
          <thead><tr><th></th>
            <th><div class="hd nm"><input type="checkbox" aria-label="Select all">Name</div></th>
            <th><div class="hd">${ic("sortMark")}Date modified</div></th><th><div class="hd">Type</div></th><th><div class="hd">Size</div></th></tr></thead>
          <tbody>
            <tr><th colspan="5"><div class="grp">${ic("expand")}Today</div></th></tr>
            <tr class="sel"><td></td><td><div class="c nm"><input type="checkbox" aria-label="Select setup" .checked=${true}>${ic("script")}setup</div></td><td><div class="c">2025/09/16</div></td><td><div class="c"></div></td><td><div class="c"></div></td></tr>
            <tr><td></td><td><div class="c nm un">${ic("folder")}Data</div></td><td><div class="c">2025/09/16</div></td><td></td><td></td></tr>
          </tbody></table>`}
      </div>
      <footer class="status">${this.inactive ? html`<span>1 item</span><i></i>` : html`<span>2 items</span><i></i><span>1 item selected</span><span class="sz">1.16 KB</span><i></i>`}
        <div class="modes"><button class="on" aria-label="Details view">${ic("rows")}</button><button aria-label="Thumbnail view">${ic("thumb")}</button></div>
      </footer>`;
  }
}

@customElement("context-menu")
class ContextMenu extends LitElement {
  static styles = [base, css`
    :host { display: block; border: 1px solid #e3e3e3; border-radius: 8px; background: #fcfcfc; box-shadow: 0 6px 14px rgba(0,0,0,.2); }
    .quick { display: flex; justify-content: space-between; height: 59px; padding: 3px 3px 0; border-bottom: 1px solid #e6e6e6; background: #f9f9f9; border-radius: 8px 8px 0 0; }
    .quick button { flex-direction: column; width: 60px; gap: 6px; }
    .quick .g { height: 18px; display: flex; align-items: center; }
    .list { padding: 3px; }
    .item { width: 100%; height: 32px; justify-content: flex-start; padding: 0 12px; font-size: 13px; border-radius: 4px; color: #1b1b1b; position: relative; }
    .item .g { width: 16px; display: flex; justify-content: center; margin-right: 11px; color: #0a78d0; }
    .item .key { margin-left: auto; width: 67px; padding-top: 2px; text-align: left; font-size: 12px; color: #666; }
    .item .more { margin-left: auto; color: #666; padding-right: 1px; }
    .item.hot { background: #f2f2f2; }
    .item.hot::after { content: ""; position: absolute; inset: -6px 0 -2px -4px; border: 7px solid #fe2500; border-radius: 4px; }
    .jp { font-size: 12px; }
    .rule { height: 1px; background: #e6e6e6; margin: 4px 0; }
  `];
  private item(icon: string, text: unknown, key = "", more = false, hot = false) {
    return html`<button class=${classMap({ item: true, hot })}><span class="g">${ic(icon)}</span><span>${text}</span>${key ? html`<span class="key">${key}</span>` : nothing}${more ? html`<span class="more">${ic("right")}</span>` : nothing}</button>`;
  }
  render() {
    const q = [["cut", "Cut"], ["copy", "Copy"], ["rename", "Rename"], ["share", "Share"], ["trash", "Delete"]];
    return html`
      <div class="quick">${q.map(([i, t]) => html`<button><span class="g">${ic(i)}</span><span>${t}</span></button>`)}</div>
      <div class="list">
        ${this.item("open", "Open", "Enter")}${this.item("share", "Share with", "", true)}
        ${this.item("admin", "Run as administrator", "", false, true)}${this.item("star", "Add to Favorites")}
        ${this.item("compress", "Compress to...", "", true)}${this.item("path", "Copy as path", "Ctrl+Shift+C")}
        ${this.item("wrench", "Properties", "Alt+Enter")}<div class="rule"></div>
        ${this.item("notepad", html`<span class="jp">メモ帳で編集</span>`)}<div class="rule"></div>${this.item("more", "Show more options")}
      </div>`;
  }
}

@customElement("browser-window")
class BrowserWindow extends LitElement {
  static styles = [base, css`
    :host { display: flex; flex-direction: column; background: #f7f7f7; min-height: 0; }
    .strip { display: flex; height: 34px; background: #cdcdcd; align-items: center; flex: none; }
    .side { width: 40px; height: 34px; }
    .tab { display: flex; align-items: center; align-self: stretch; width: 240px; margin-left: 4px; background: #f7f7f7; border-radius: 8px 8px 0 0; padding: 0 10px 0 7px; }
    .fav { width: 16px; height: 16px; color: #004e98; font-weight: 700; font-style: italic; font-size: 12px; line-height: 12px; text-align: center;
      background: linear-gradient(#e60012, #e60012) 5px 12px / 6px 2px no-repeat #fff; }
    .ttl { flex: 1; margin-left: 10px; white-space: nowrap; font-size: 12px; }
    .jp { font-size: 10px; }
    .tab button { width: 12px; height: 24px; }
    .tab + button { width: 34px; height: 34px; }
    .wc { display: flex; margin-left: auto; }
    .wc button { width: 46px; height: 34px; }
    .bar { display: flex; align-items: center; height: 40px; flex: none; padding: 0 8px 0 2px; }
    .bar .b { width: 36px; height: 32px; }
    .url { flex: 1; display: flex; align-items: center; height: 32px; margin: 0 8px 0 6px; padding: 0 10px 0 3px; border: 1px solid #cdcdcd; border-radius: 16px; background: #fdfdfd; color: #666; }
    .url .ie { width: 33px; height: 24px; border-radius: 12px; background: #c6c6c6; margin-right: 5px; }
    .url input { flex: 1; min-width: 0; margin-left: 12px; font-size: 13px; color: #3f3f3f; }
    .acts { display: flex; gap: 4px; }
    .acts button { width: 32px; height: 32px; border-radius: 4px; }
    .acts .on { background: #d3d3d3; }
    .page { flex: 1; margin: 0 5px 4px 4px; background: #fff; box-shadow: 0 0 3px rgba(0,0,0,.25); display: flex; min-height: 0; overflow: hidden; }
    .doc { flex: 1; display: flex; flex-direction: column; }
    .head { height: 113px; border-bottom: 1px solid #cacaca; padding: 37px 0 0 40px; }
    .logo { display: inline-block; padding-bottom: 6px; color: #004e98; font-weight: 700; font-style: italic; font-size: 20px; line-height: 22px; border-bottom: 4px solid #dc0d18; }
    h2 { margin: auto 0 31px 191px; padding-bottom: 6px; border-bottom: 2px solid #555; font-size: 18px; line-height: 24px; color: #111; }
    .scroll { width: 16px; background: #f1f1f1; display: flex; flex-direction: column; align-items: center; padding-top: 17px; }
    .thumb { width: 15px; height: 120px; margin-top: 7px; background: #c4c4c4; }
  `];
  render() {
    return html`
      <div class="strip">
        <button class="side" aria-label="Tab actions">${ic("tabs")}</button>
        <div class="tab"><span class="fav">S</span><span class="ttl">Windows 11 <span class="jp">へのアップデートを行う –</span></span><button aria-label="Close tab">${ic("close")}</button></div>
        <button aria-label="New tab">${ic("plusBig")}</button>
        <div class="wc"><button aria-label="Minimize">${ic("min")}</button><button aria-label="Restore">${ic("restore")}</button><button aria-label="Close">${ic("close")}</button></div>
      </div>
      <div class="bar">
        <button class="b" aria-label="Back">${ic("backBig")}</button><button class="b" aria-label="Refresh">${ic("refreshBig")}</button>
        <div class="url"><button class="ie" aria-label="Internet Explorer mode">${ic("ie")}</button>${ic("lock")}
          <input aria-label="Address" .value=${"https://jp-help.sansan.com/hc/ja/articles/8406344339993-Windows-11-へのアップデートを行う"}>${ic("star")}</div>
        <div class="acts"><button aria-label="Favorites">${ic("starList")}</button><button class="on" aria-label="Downloads">${ic("download")}</button><button aria-label="Edge tools">${ic("edgeTool")}</button><button aria-label="Profile">${ic("avatar")}</button><button aria-label="Settings">${ic("dots")}</button><button aria-label="Copilot">${ic("copilot")}</button></div>
      </div>
      <div class="page">
        <div class="doc"><div class="head"><span class="logo">sansan</span></div><h2>注意事項</h2></div>
        <div class="scroll">${ic("scrollUp")}<div class="thumb"></div></div>
      </div>`;
  }
}

@customElement("ie-popup")
class IePopup extends LitElement {
  static styles = [base, css`
    :host { display: block; background: #fff; border-radius: 8px; box-shadow: 0 4px 14px rgba(0,0,0,.35); padding: 16px 0 6px; white-space: nowrap; overflow: hidden; }
    .in { padding: 0 16px; }
    h3 { margin: 0 0 17px; font-size: 14px; line-height: 19px; }
    p { margin: 0; }
    a { display: inline-block; margin: 2px 0 10px 2px; color: #1a5fc8; text-decoration: underline; }
    .gap { margin-top: 22px; }
    .in button { width: 77px; height: 32px; margin: 7px 0 20px; border: 1px solid #ccc; border-radius: 4px; font-weight: 700; }
    .row { display: flex; align-items: center; height: 38px; padding-left: 20px; }
    .row span { width: 30px; }
    .rows { border-top: 1px solid #dcdcdc; padding-top: 4px; }
  `];
  render() {
    return html`<div class="in"><h3>This page is open in<br>mode</h3>
      <p>Most pages work better<br>security reasons, leave<br>as soon as you're done</p><a href="#">Learn more</a>
      <p>Open this page</p><p class="gap">Open this page<br>next time</p><button>Manage</button></div>
      <div class="rows"><div class="row"><span>${ic("page")}</span>Compatibility</div><div class="row"><span>${ic("shield")}</span>Protected mode</div><div class="row"><span>${ic("zone")}</span>Zone: Inv</div></div>`;
  }
}

@customElement("task-bar")
class TaskBar extends LitElement {
  static styles = [base, css`
    :host { display: grid; grid-template-columns: 1fr auto 1fr; align-items: center; height: 48px; color: #fff; border-top: 1px solid #55504a;
      background: linear-gradient(90deg, #2b2017, #2b1e1a 22%, #2d2015 35%, #2a2115 50%, #2a2018 70%, #261d1b); }
    .wx { justify-self: start; margin-left: 20px; gap: 4px; text-align: left; position: relative; font-size: 11px; }
    .wx small { display: block; color: #ccc; font-size: 11px; }
    .badge { position: absolute; left: 10px; top: -1px; width: 16px; height: 16px; border-radius: 8px; background: #c42b1c; text-align: center; font-size: 11px; }
    .mid { display: flex; align-items: center; gap: 4px; padding-left: 2px; }
    .mid button { width: 40px; height: 40px; border-radius: 4px; position: relative; }
    label { display: flex; align-items: center; gap: 10px; width: 218px; height: 30px; margin: 0 1px; padding: 0 10px; border-radius: 15px; background: #f2f1ef; }
    input { flex: 1; min-width: 0; font-size: 13px; }
    input::placeholder { color: #666; opacity: 1; }
    .mid .run { background: #3b3127; border: 1px solid #483f35; }
    .mid .act { background: #84444c; }
    .run::after, .act::after { content: ""; position: absolute; bottom: 1px; width: 16px; height: 3px; border-radius: 2px; background: #cbd35b; }
    .act::after { width: 32px; background: #ff9aa5; }
    .tray { justify-self: end; display: flex; align-items: center; padding-right: 20px; }
    .eng { margin: 0 18px 0 20px; }
    .net { gap: 8px; }
    .clock { text-align: right; margin: 0 7px 0 15px; }
  `];
  render() {
    return html`
      <button class="wx">${ic("weather")}<span class="badge">7</span><span>この先、暑い日が...<small>31°C</small></span></button>
      <div class="mid">
        <button aria-label="Start">${ic("start")}</button>
        <label>${ic("searchBig")}<input placeholder="Search" aria-label="Search"></label>
        <button aria-label="Task view">${ic("taskView")}</button><button aria-label="Teams">${ic("teams")}</button>
        <button class="run" aria-label="File Explorer">${ic("explorer")}</button><button class="act" aria-label="Edge">${ic("edge")}</button><button aria-label="Snap">${ic("snap")}</button>
      </div>
      <div class="tray"><button aria-label="Hidden icons">${ic("caret")}</button><button class="eng">ENG</button>
        <button class="net" aria-label="Network, sound, battery">${ic("wifi")}${ic("mute")}${ic("battery")}</button>
        <button class="clock"><span>16:49<br>2025/09/16</span></button><button aria-label="Notifications">${ic("bell")}</button></div>`;
  }
}

@customElement("app-root")
class AppRoot extends LitElement {
  static styles = css`
    :host { display: flex; flex-direction: column; height: 100vh; position: relative; overflow: hidden; }
    browser-window { flex: 1; }
    .float { position: absolute; }
    ie-popup { left: 80px; top: 70px; width: 360px; }
    .rear { left: 176px; top: 69px; width: 1124px; height: 592px; box-shadow: 0 14px 36px rgba(0,0,0,.32); }
    .front { left: 235px; top: 121px; width: 1124px; height: 592px; box-shadow: 0 14px 44px rgba(0,0,0,.5); }
    context-menu { left: 715px; top: 283px; width: 308px; }
    task-bar { position: relative; }
  `;
  render() {
    return html`
      <browser-window></browser-window>
      <ie-popup class="float"></ie-popup>
      <explorer-window class="float rear" inactive .tabIcon=${"zip"}></explorer-window>
      <explorer-window class="float front"></explorer-window>
      <context-menu class="float"></context-menu>
      <task-bar></task-bar>`;
  }
}
